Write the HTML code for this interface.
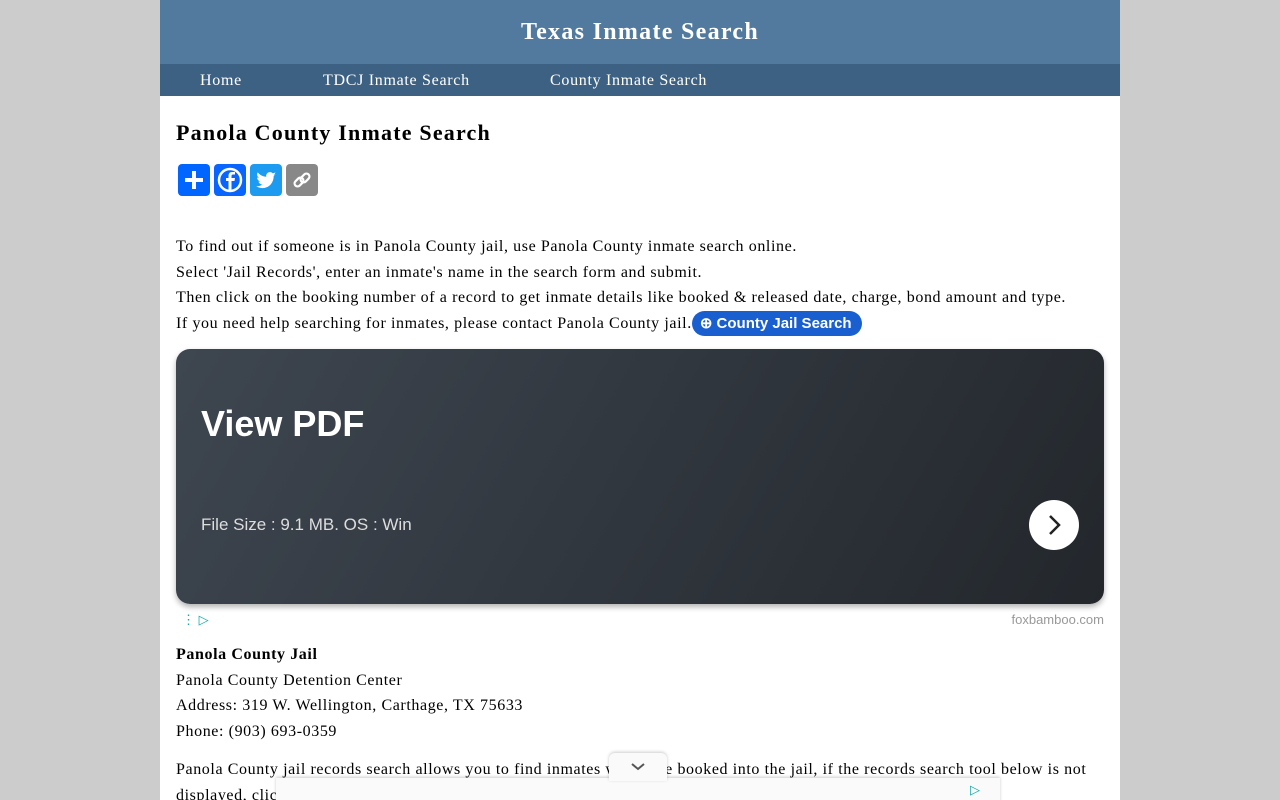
<!DOCTYPE html>
<html><head><style>
body{margin:0;background:#ccc;font-family:"Liberation Serif",serif;}
.page{position:absolute;left:160px;top:0;width:960px;height:800px;background:#fff;overflow:hidden}
.hdr{height:64px;background:#527a9e;color:#fff;text-align:center;font-weight:bold;font-size:24px;line-height:64px;letter-spacing:1.3px}
.nav{height:32px;background:#3d6183;color:#fff;font-size:16px;line-height:32px;position:relative;letter-spacing:.7px}
.nav span{position:absolute;top:1px}
h1{position:absolute;left:16px;top:120px;margin:0;font-size:22px;letter-spacing:1.2px}
.sh{position:absolute;top:164px;width:32px;height:32px;border-radius:4px}
p{margin:0;font-size:16px;line-height:25.7px;letter-spacing:.6px}
.txt{position:absolute;left:16px;top:234px;width:940px}
.btn{display:inline-block;background:#1a5fd0;color:#fff;font-family:"Liberation Sans",sans-serif;font-weight:bold;font-size:15px;border-radius:13px;padding:0 10px 0 8px;line-height:25px;vertical-align:0;letter-spacing:0}
.ad{position:absolute;left:16px;top:349px;width:928px;height:255px;border-radius:14px;background:linear-gradient(120deg,#3e4650,#23272c);box-shadow:0 3px 6px rgba(0,0,0,.3);color:#fff;font-family:"Liberation Sans",sans-serif}
.ad b{position:absolute;left:25px;top:54px;font-size:36px}
.ad i{position:absolute;left:25px;top:166px;font-size:17px;font-style:normal;color:#ddd}
.circ{position:absolute;left:853px;top:151px;width:50px;height:50px;border-radius:50%;background:#fff}
.info{position:absolute;left:16px;top:642px}
.bot{position:absolute;left:16px;top:757px;width:930px}
.ov{position:absolute;left:116px;top:778px;width:724px;height:30px;background:#fafafa;box-shadow:0 -1px 3px rgba(0,0,0,.2)}
.tab{position:absolute;left:449px;top:753px;width:58px;height:28px;background:#fafafa;border-radius:6px 6px 0 0;box-shadow:0 -1px 3px rgba(0,0,0,.2)}
</style></head><body><div class="page">
<div class="hdr">Texas Inmate Search</div>
<div class="nav"><span style="left:40px">Home</span><span style="left:163px">TDCJ Inmate Search</span><span style="left:390px">County Inmate Search</span></div>
<h1>Panola County Inmate Search</h1>
<div class="sh" style="left:18px;background:#0166ff"><svg width="32" height="32"><path d="M16 7v18M7 16h18" stroke="#fff" stroke-width="4"/></svg></div>
<div class="sh" style="left:54px;background:#0866ff"><svg width="32" height="32"><circle cx="16" cy="16" r="11" fill="none" stroke="#fff" stroke-width="2.5"/><path d="M17.5 27V17h3l.5-3h-3.5v-2c0-1 .5-1.5 1.5-1.5h2V8h-3c-2.5 0-3.5 1.5-3.5 4v2h-2.5v3h2.5v10z" fill="#fff"/></svg></div>
<div class="sh" style="left:90px;background:#1d9bf0"><svg width="32" height="32"><path d="M26 10c-.8.4-1.6.6-2.4.7.9-.5 1.500-1.3 1.8-2.3-.8.5-1.7.8-2.6 1-1.6-1.8-4.6-1.6-6 .4-.6.9-.8 2-.5 3-3.4-.2-6.5-1.8-8.6-4.4-1.100 1.9-.5 4.3 1.3 5.5-.7 0-1.3-.2-1.9-.5 0 2 1.4 3.7 3.3 4.1-.6.2-1.2.2-1.9.1.5 1.7 2.1 2.8 3.8 2.9-1.7 1.3-3.9 2-6.1 1.7 8.5 5 17.5-.5 17.5-10.3.8-.6 1.5-1.3 2.1-2.1z" fill="#fff"/></svg></div>
<div class="sh" style="left:126px;background:#888"><svg width="32" height="32"><g fill="none" stroke="#fff" stroke-width="2.2"><rect x="8" y="15" width="10" height="6" rx="3" transform="rotate(-45 13 18)"/><rect x="14" y="11" width="10" height="6" rx="3" transform="rotate(-45 19 14)"/></g></svg></div>
<div class="txt"><p>To find out if someone is in Panola County jail, use Panola County inmate search online.</p><p>Select 'Jail Records', enter an inmate's name in the search form and submit.</p><p>Then click on the booking number of a record to get inmate details like booked &amp; released date, charge, bond amount and type.</p><p>If you need help searching for inmates, please contact Panola County jail.<span class="btn">⊕ County Jail Search</span></p></div>
<div class="ad"><b>View PDF</b><i>File Size : 9.1 MB. OS : Win</i><div class="circ"><svg width="50" height="50"><path d="M21 16l9 9-9 9" fill="none" stroke="#222" stroke-width="2.5"/></svg></div></div>
<div style="position:absolute;left:22px;top:612px;color:#1aa;font-size:13px;font-family:'Liberation Sans'">⋮ ▷</div>
<div style="position:absolute;right:16px;top:612px;color:#999;font-size:13px;font-family:'Liberation Sans',sans-serif">foxbamboo.com</div>
<div class="info"><p><b>Panola County Jail</b></p><p>Panola County Detention Center</p><p>Address: 319 W. Wellington, Carthage, TX 75633</p><p>Phone: (903) 693-0359</p></div>
<div class="bot"><p>Panola County jail records search allows you to find inmates who were booked into the jail, if the records search tool below is not displayed, click here to search and locate</p></div>
<div class="ov"><span style="position:absolute;right:20px;top:4px;color:#1aa;font-size:13px">▷</span></div>
<div class="tab"><svg width="58" height="28"><path d="M23 11l6 5 6-5" fill="none" stroke="#555" stroke-width="2"/></svg></div>
</div></body></html>
